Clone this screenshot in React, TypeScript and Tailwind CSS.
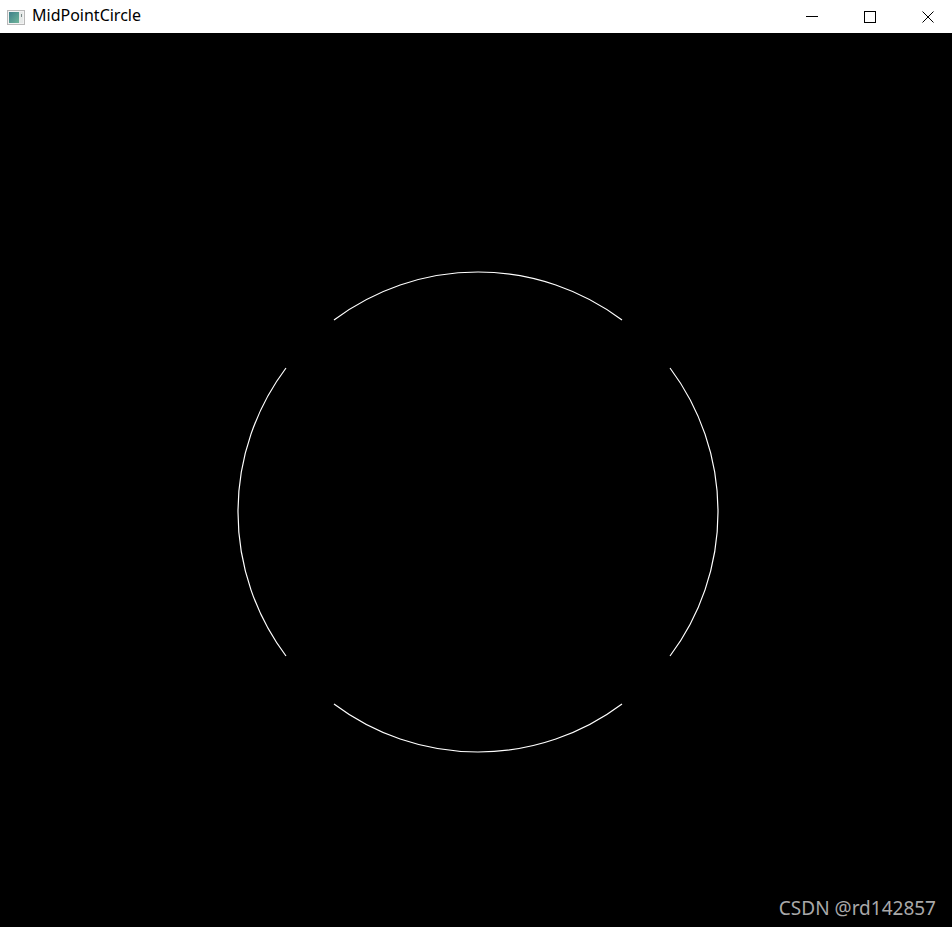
import React from 'react'

// 中点画圆：窗口 + 画布

const CX = 478
const CY = 479
const R = 240

function arc(x1: number, y1: number, x2: number, y2: number): string {
  return `M ${CX + x1} ${CY + y1} A ${R} ${R} 0 0 1 ${CX + x2} ${CY + y2}`
}

function AppIcon() {
  return (
    <svg width="18" height="15" viewBox="0 0 18 15" className="shrink-0">
      <defs>
        <linearGradient id="ico" x1="0" y1="0" x2="1" y2="1">
          <stop offset="0" stopColor="#3f7f8a" />
          <stop offset="1" stopColor="#6fb59a" />
        </linearGradient>
      </defs>
      <rect x="0.5" y="0.5" width="17" height="14" fill="#f2f2f2" stroke="#b8b8b8" />
      <rect x="2" y="2" width="10" height="11" fill="url(#ico)" />
      <rect x="12" y="2" width="4" height="11" fill="#e6e9e8" />
      <rect x="14" y="4" width="1" height="3" fill="#7a8a88" />
    </svg>
  )
}

function TitleBar() {
  return (
    <div className="flex h-[33px] items-center bg-white text-black">
      <div className="flex items-center pl-[7px] pt-px">
        <AppIcon />
      </div>
      <span
        className="ml-[7px] flex-1 pb-[3px] text-[16px] leading-none"
        style={{ fontFamily: '"Noto Sans", "Noto Sans CJK SC", sans-serif' }}
      >
        MidPointCircle
      </span>
      <div className="mr-[-5px] flex h-full">
        <div className="flex w-[58px] items-center justify-center">
          <svg width="12" height="12" viewBox="0 0 12 12">
            <line x1="0" y1="5.5" x2="12" y2="5.5" stroke="#000" strokeWidth="1" />
          </svg>
        </div>
        <div className="flex w-[58px] items-center justify-center">
          <svg width="12" height="12" viewBox="0 0 12 12">
            <rect x="0.5" y="0.5" width="11" height="11" fill="none" stroke="#000" strokeWidth="1" />
          </svg>
        </div>
        <div className="flex w-[58px] items-center justify-center">
          <svg width="12" height="12" viewBox="0 0 12 12">
            <path d="M0.5 0.5 L11.5 11.5 M11.5 0.5 L0.5 11.5" stroke="#000" strokeWidth="1" />
          </svg>
        </div>
      </div>
    </div>
  )
}

export default function App() {
  return (
    <div className="flex h-[927px] w-[952px] flex-col overflow-hidden bg-black">
      <TitleBar />
      <div className="relative flex-1">
        <svg width="952" height="894" viewBox="0 0 952 894" className="block">
          <g fill="none" stroke="#fff" strokeWidth="1.2">
            <path d={arc(192, -144, 192, 144)} />
            <path d={arc(144, 192, -144, 192)} />
            <path d={arc(-192, 144, -192, -144)} />
            <path d={arc(-144, -192, 144, -192)} />
          </g>
        </svg>
        {/* 水印 */}
        <span
          className="absolute right-[16px] bottom-[5px] text-[19px] text-[#a9a9a9]"
          style={{ fontFamily: '"Noto Sans", "Noto Sans CJK SC", sans-serif' }}
        >
          CSDN @rd142857
        </span>
      </div>
    </div>
  )
}
